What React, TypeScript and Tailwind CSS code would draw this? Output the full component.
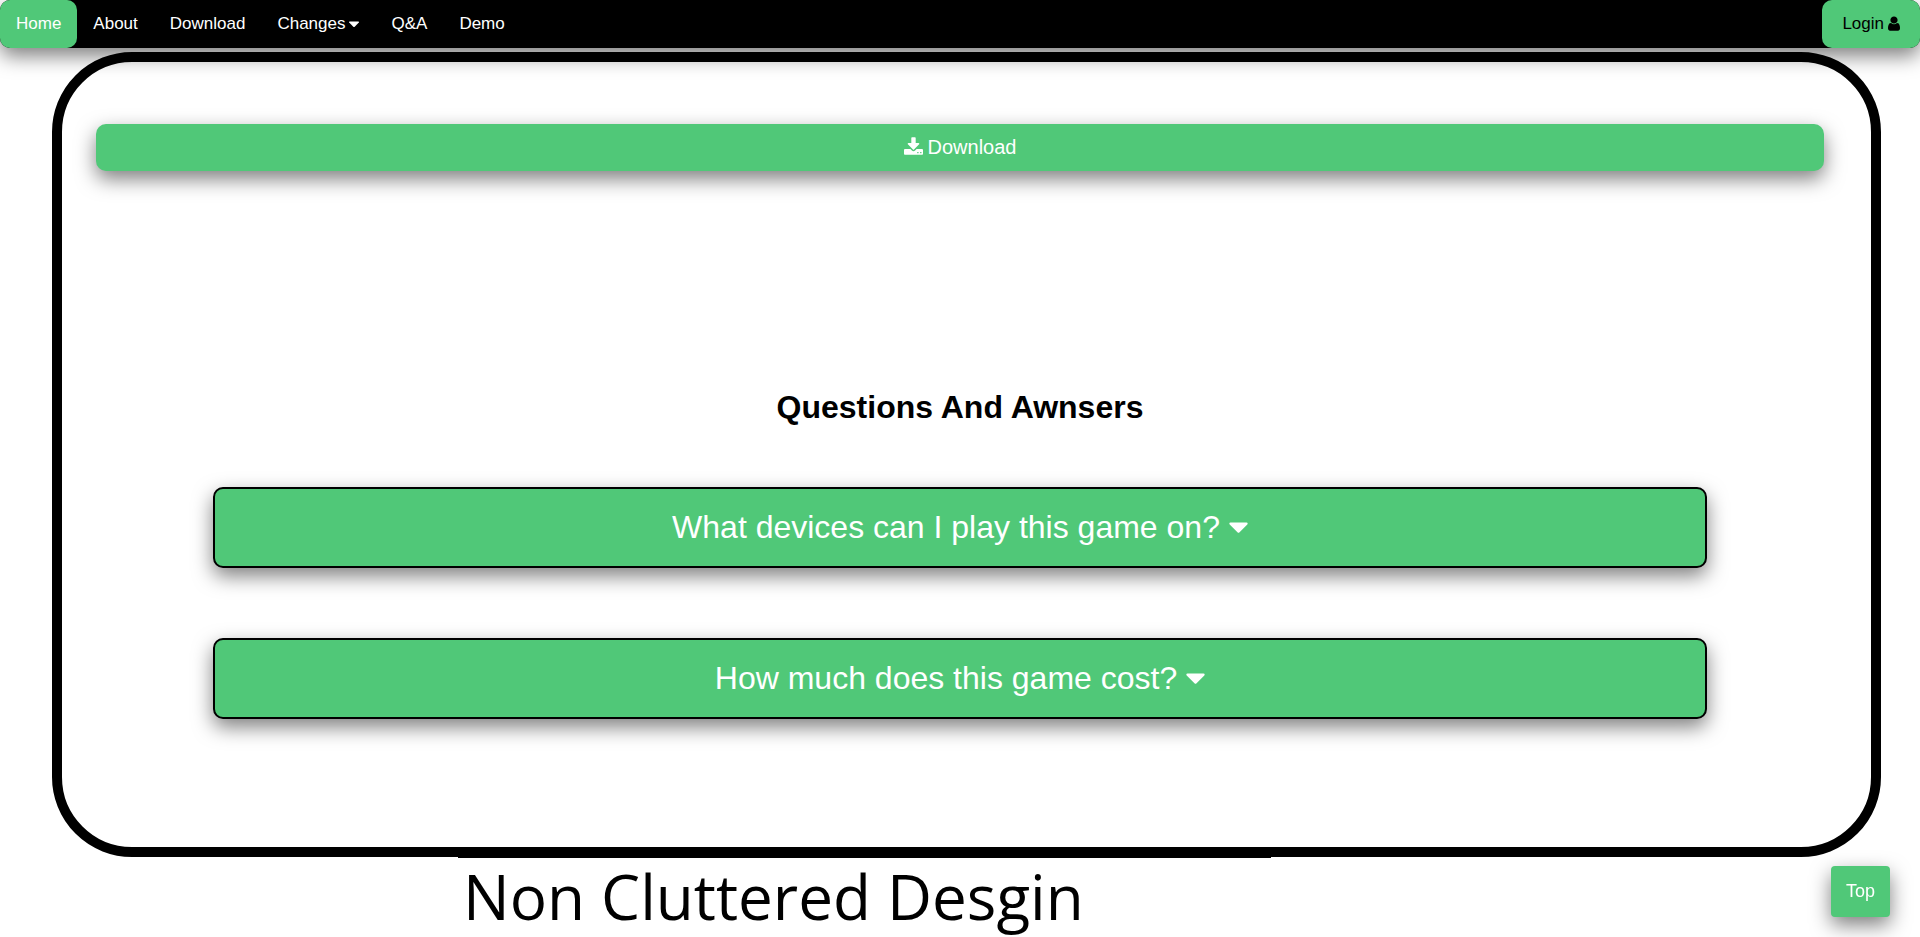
import React from "react";

const SHADOW = "shadow-[0_8px_20px_rgba(0,0,0,0.5)]";

function CaretDown({ className }: { className: string }) {
  return (
    <svg viewBox="0 56 1024 1792" fill="currentColor" aria-hidden="true" className={className}>
      <path d="M1024 704q0 26-19 45l-448 448q-19 19-45 19t-45-19L19 749Q0 730 0 704t19-45 45-19h896q26 0 45 19t19 45z" />
    </svg>
  );
}

function DownloadIcon({ className }: { className: string }) {
  return (
    <svg viewBox="0 0 1664 1792" fill="currentColor" aria-hidden="true" className={className}>
      <path d="M1280 1344q0-26-19-45t-45-19-45 19-19 45 19 45 45 19 45-19 19-45zm256 0q0-26-19-45t-45-19-45 19-19 45 19 45 45 19 45-19 19-45zm128-224v320q0 40-28 68t-68 28h-1472q-40 0-68-28t-28-68v-320q0-40 28-68t68-28h465l135 136q58 56 136 56t136-56l136-136h464q40 0 68 28t28 68zm-325-569q17 41-14 70l-448 448q-18 19-45 19t-45-19l-448-448q-31-29-14-70 17-39 59-39h256v-448q0-26 19-45t45-19h256q26 0 45 19t19 45v448h256q42 0 59 39z" />
    </svg>
  );
}

function UserIcon({ className }: { className: string }) {
  return (
    <svg viewBox="0 128 1280 1728" fill="currentColor" aria-hidden="true" className={className}>
      <path d="M1280 1399q0 109-62.5 187t-150.5 78h-854q-88 0-150.5-78t-62.5-187q0-85 8.5-160.5t31.5-152 58.5-131 94-89 134.5-34.5q131 128 313 128t313-128q76 0 134.5 34.5t94 89 58.5 131 31.5 152 8.5 160.5zm-256-887q0 159-112.5 271.5t-271.5 112.5-271.5-112.5-112.5-271.5 112.5-271.5 271.5-112.5 271.5 112.5 112.5 271.5z" />
    </svg>
  );
}

const navItem = "flex items-center px-4 text-white";

function NavBar() {
  return (
    <nav className={`flex h-12 rounded-[10px] bg-black text-[17px] leading-5 ${SHADOW}`}>
      <a href="#home" className={`${navItem} rounded-[10px] bg-[#50c878]`}>Home</a>
      <a href="#about" className={navItem}>About</a>
      <a href="#download" className={navItem}>Download</a>
      <button type="button" className={`${navItem} gap-1`}>
        Changes
        <CaretDown className="h-[19px] w-[10px]" />
      </button>
      <a href="#questions" className={navItem}>Q&amp;A</a>
      <a href="#demo" className={navItem}>Demo</a>
      <button type="button" className="ml-auto flex items-center gap-1 rounded-[10px] bg-[#50c878] px-5 text-black">
        Login
        <UserIcon className="h-[17px] w-3" />
      </button>
    </nav>
  );
}

function Question({ children }: { children: string }) {
  return (
    <button
      type="button"
      className={`mx-[117px] flex items-center justify-center gap-[9px] rounded-[10px] border-2 border-black bg-[#50c878] py-5 text-[32px] leading-[37px] text-white ${SHADOW}`}
    >
      {children}
      <CaretDown className="h-8 w-[19px]" />
    </button>
  );
}

export default function App() {
  return (
    <div className="bg-white font-['Liberation_Sans',Arial,sans-serif] text-black">
      <NavBar />
      <main>
        <section className="mt-1 mr-[39px] ml-[52px] flex flex-col rounded-[80px] border-10 border-black pt-[62px] pr-[47px] pb-32 pl-[34px]">
          <button
            id="download"
            type="button"
            className={`flex items-center justify-center gap-[5px] rounded-[10px] bg-[#50c878] py-3 text-[20px] leading-[23px] text-white ${SHADOW}`}
          >
            <DownloadIcon className="h-[21px] w-[19px]" />
            Download
          </button>
          <h1 id="questions" className="mt-54 text-center text-[32px] leading-10 font-bold">
            Questions And Awnsers
          </h1>
          <div className="mt-[60px] flex flex-col gap-[70px]">
            <Question>What devices can I play this game on?</Question>
            <Question>How much does this game cost?</Question>
          </div>
        </section>
        <section className="flex h-20 pr-[191px]">
          <h2 className="mx-auto w-[813px] border-t border-black pl-[5px] font-['Open_Sans','Noto_Sans',sans-serif] text-[62px] leading-[76px]">
            Non Cluttered Desgin
          </h2>
        </section>
      </main>
      <button
        type="button"
        className={`fixed right-[30px] bottom-5 rounded-sm bg-[#50c878] p-[15px] text-[18px] leading-[21px] text-white ${SHADOW}`}
      >
        Top
      </button>
    </div>
  );
}
